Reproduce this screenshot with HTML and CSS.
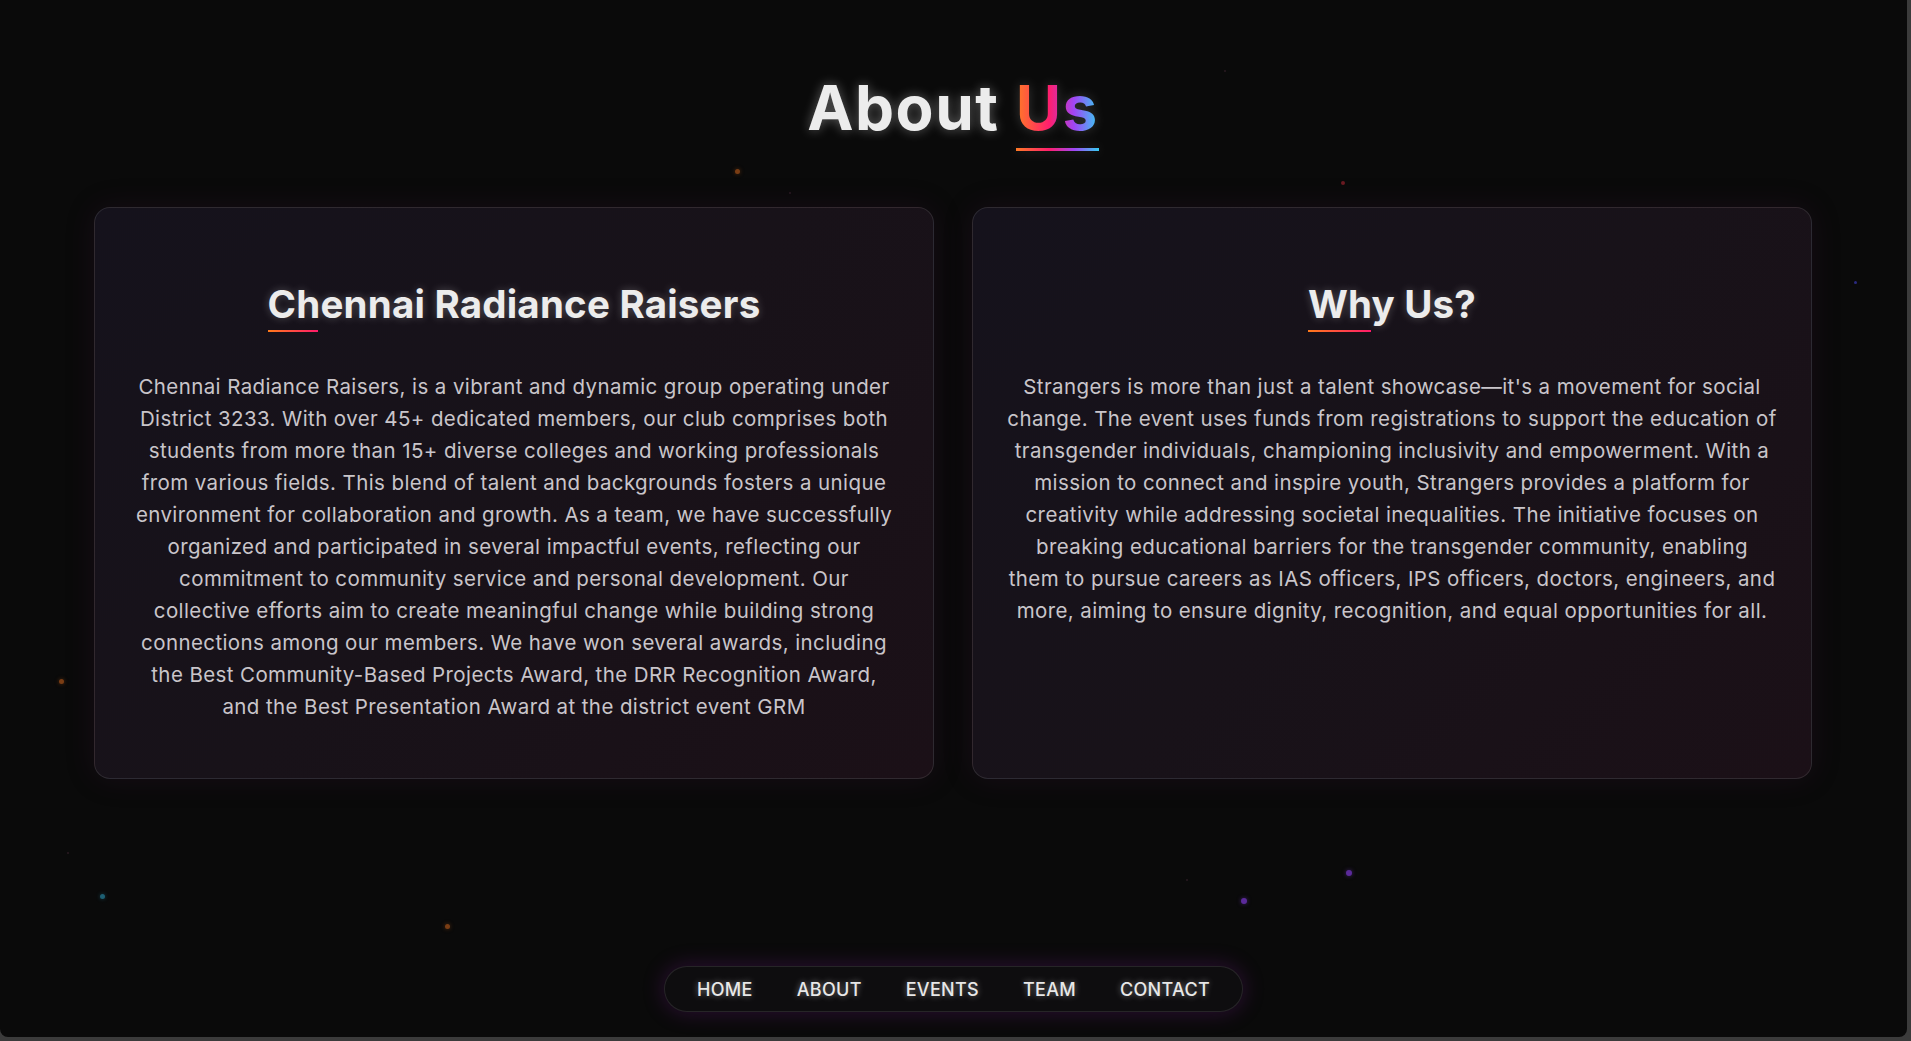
FILE: index.html
```html
<!DOCTYPE html>
<html lang="en">
<head>
<meta charset="utf-8">
<title>About Us</title>
<link rel="stylesheet" href="styles.css">
</head>
<body>
<div class="page">
  <div class="particles" aria-hidden="true">
    <span class="dot dot-orange" style="left:735px;top:169px"></span>
    <span class="dot dot-tiny" style="left:789px;top:192px"></span>
    <span class="dot dot-red" style="left:1341px;top:181px"></span>
    <span class="dot dot-blue" style="left:1854px;top:281px"></span>
    <span class="dot dot-orange" style="left:59px;top:679px"></span>
    <span class="dot dot-teal" style="left:100px;top:894px"></span>
    <span class="dot dot-orange" style="left:445px;top:924px"></span>
    <span class="dot dot-purple" style="left:1346px;top:870px"></span>
    <span class="dot dot-purple" style="left:1241px;top:898px"></span>
    <span class="dot dot-tiny" style="left:1186px;top:879px"></span>
    <span class="dot dot-tiny" style="left:1224px;top:70px"></span>
    <span class="dot dot-tiny" style="left:67px;top:852px"></span>
  </div>

  <section class="about">
    <h1 class="title">About <span class="accent">Us</span></h1>

    <div class="cards">
      <article class="card">
        <h2 class="card-title"><span class="card-heading card-heading-short">Chennai Radiance Raisers</span></h2>
        <p class="card-text">Chennai Radiance Raisers, is a vibrant and dynamic group operating under<br>District 3233. With over 45+ dedicated members, our club comprises both<br>students from more than 15+ diverse colleges and working professionals<br>from various fields. This blend of talent and backgrounds fosters a unique<br>environment for collaboration and growth. As a team, we have successfully<br>organized and participated in several impactful events, reflecting our<br>commitment to community service and personal development. Our<br>collective efforts aim to create meaningful change while building strong<br>connections among our members. We have won several awards, including<br>the Best Community-Based Projects Award, the DRR Recognition Award,<br>and the Best Presentation Award at the district event GRM</p>
      </article>

      <article class="card">
        <h2 class="card-title"><span class="card-heading card-heading-long">Why Us?</span></h2>
        <p class="card-text">Strangers is more than just a talent showcase—it's a movement for social<br>change. The event uses funds from registrations to support the education of<br>transgender individuals, championing inclusivity and empowerment. With a<br>mission to connect and inspire youth, Strangers provides a platform for<br>creativity while addressing societal inequalities. The initiative focuses on<br>breaking educational barriers for the transgender community, enabling<br>them to pursue careers as IAS officers, IPS officers, doctors, engineers, and<br>more, aiming to ensure dignity, recognition, and equal opportunities for all.</p>
      </article>
    </div>
  </section>

  <nav class="nav">
    <a class="nav-link" href="#">HOME</a>
    <a class="nav-link" href="#">ABOUT</a>
    <a class="nav-link" href="#">EVENTS</a>
    <a class="nav-link" href="#">TEAM</a>
    <a class="nav-link" href="#">CONTACT</a>
  </nav>
</div>
</body>
</html>
```

FILE: styles.css
```css
* { box-sizing: border-box; }

html, body {
  margin: 0;
  padding: 0;
}

body {
  background: #3b3b3b;
  font-family: Inter, "Open Sans", "DejaVu Sans", sans-serif;
  color: #ececec;
}

.page {
  position: relative;
  width: calc(100% - 4px);
  height: 1037px;
  background: #0a0a0a;
  border-radius: 0 0 8px 8px;
  overflow: hidden;
  display: flex;
  flex-direction: column;
}

/* background particles (free canvas) */
.particles {
  position: absolute;
  inset: 0;
  pointer-events: none;
}
.dot {
  position: absolute;
  width: 5px;
  height: 5px;
  border-radius: 50%;
}
.dot-orange { background: #7a3d14; box-shadow: 0 0 4px rgba(160, 80, 20, .5); }
.dot-red { background: #6a1a22; width: 4px; height: 4px; }
.dot-blue { background: #2a2a80; width: 3px; height: 3px; }
.dot-teal { background: #1d5f73; box-shadow: 0 0 4px rgba(40, 140, 170, .4); }
.dot-purple { background: #5b2a9a; box-shadow: 0 0 4px rgba(120, 60, 200, .5); width: 6px; height: 6px; }
.dot-tiny { background: #2a1a22; width: 2px; height: 2px; }

.about {
  position: relative;
  padding: 72px 95px 0 94px;
}

.title {
  margin: 0;
  text-align: center;
  font-size: 62px;
  line-height: 72px;
  font-weight: 700;
  letter-spacing: 1.5px;
  color: #ececec;
  text-shadow: 0 0 12px rgba(255, 255, 255, .35);
}

.accent {
  position: relative;
  display: inline-block;
  background: linear-gradient(90deg, #ff7a25 0%, #ff1e6e 40%, #a046f5 70%, #36cdf2 100%);
  -webkit-background-clip: text;
  background-clip: text;
  color: transparent;
  text-shadow: none;
  filter: drop-shadow(0 0 6px rgba(255, 255, 255, .18));
}
.accent::after {
  content: "";
  position: absolute;
  left: 0;
  right: 0;
  bottom: -7px;
  height: 3px;
  background: linear-gradient(90deg, #ff7a25 0%, #ff1e6e 40%, #a046f5 70%, #36cdf2 100%);
}

.cards {
  margin-top: 63px;
  display: grid;
  grid-template-columns: 1fr 1fr;
  gap: 38px;
}

.card {
  border: 1px solid rgba(255, 255, 255, .1);
  border-radius: 16px;
  background: linear-gradient(135deg, #15121c 0%, #181219 50%, #1b1017 100%);
  box-shadow: 0 0 30px rgba(80, 20, 70, .18);
  padding: 73px 30px 55px;
  text-align: center;
}

.card-title {
  margin: 0;
  font-size: 38.5px;
  line-height: 46px;
  font-weight: 700;
  letter-spacing: .2px;
  color: #ececec;
  text-shadow: 0 0 8px rgba(255, 255, 255, .25);
}

.card-heading {
  position: relative;
  display: inline-block;
}
.card-heading::after {
  content: "";
  position: absolute;
  left: 0;
  bottom: -5px;
  height: 2px;
  background: linear-gradient(90deg, #ff7a1a, #ff1a6a);
}
.card-heading-short::after { width: 50px; }
.card-heading-long::after { width: 63px; }

.card-text {
  margin: 44px 0 0;
  font-size: 20.5px;
  line-height: 32px;
  letter-spacing: .4px;
  color: #c9c5ca;
  white-space: nowrap;
}

.nav {
  position: relative;
  align-self: center;
  margin: auto 0 25px;
  height: 46px;
  padding: 0 10px;
  display: flex;
  align-items: center;
  border: 1px solid rgba(255, 255, 255, .1);
  border-radius: 23px;
  background: #0e0d0f;
  box-shadow: 0 0 22px rgba(140, 30, 170, .28);
}

.nav-link {
  padding: 0 22px;
  font-size: 18px;
  font-weight: 500;
  letter-spacing: .3px;
  color: #e8e8e8;
  text-decoration: none;
  text-shadow: 0 0 6px rgba(255, 255, 255, .45);
}
```
